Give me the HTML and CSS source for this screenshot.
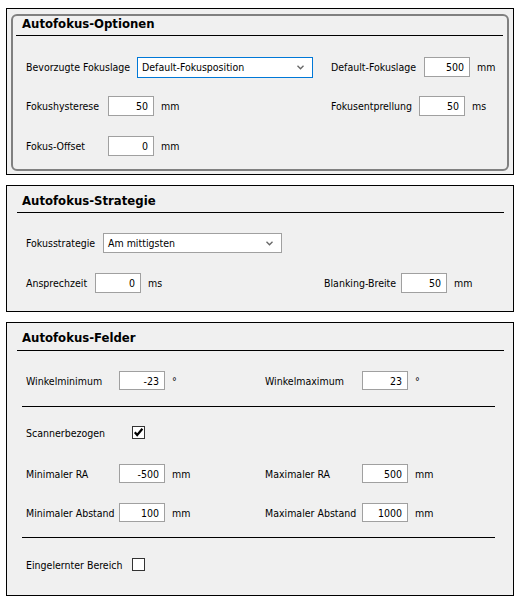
FILE: index.html
```html
<!DOCTYPE html>
<html>
<head>
<meta charset="utf-8">
<link rel="stylesheet" href="styles.css">
</head>
<body>
<div class="panel p1">
  <div class="group">
    <div class="hd">Autofokus-Optionen</div>
    <div class="row mt21">
      <div class="left l1">
        <span class="lbl w111">Bevorzugte Fokuslage</span>
        <div class="select focus w176"><span>Default-Fokusposition</span>
          <svg class="chev" width="7" height="5" viewBox="0 0 7 5"><polyline points="0.5,0.8 3.5,3.8 6.5,0.8" fill="none" stroke="#666" stroke-width="1.3"/></svg>
        </div>
      </div>
      <div class="right">
        <span class="lbl w93">Default-Fokuslage</span>
        <div class="inp">500</div><span class="unit">mm</span>
      </div>
    </div>
    <div class="row mt19">
      <div class="left l1">
        <span class="lbl w82">Fokushysterese</span>
        <div class="inp">50</div><span class="unit">mm</span>
      </div>
      <div class="right">
        <span class="lbl w88">Fokusentprellung</span>
        <div class="inp">50</div><span class="unit">ms</span>
      </div>
    </div>
    <div class="row mt20">
      <div class="left l1">
        <span class="lbl w82">Fokus-Offset</span>
        <div class="inp">0</div><span class="unit">mm</span>
      </div>
    </div>
  </div>
</div>

<div class="panel p2">
  <div class="hd hd2">Autofokus-Strategie</div>
  <div class="row mt20">
    <div class="left l2">
      <span class="lbl w77">Fokusstrategie</span>
      <div class="select w179"><span>Am mittigsten</span>
        <svg class="chev" width="7" height="5" viewBox="0 0 7 5"><polyline points="0.5,0.8 3.5,3.8 6.5,0.8" fill="none" stroke="#666" stroke-width="1.3"/></svg>
      </div>
    </div>
  </div>
  <div class="row mt20">
    <div class="left l2">
      <span class="lbl w69">Ansprechzeit</span>
      <div class="inp">0</div><span class="unit">ms</span>
    </div>
    <div class="right">
      <span class="lbl w77">Blanking-Breite</span>
      <div class="inp">50</div><span class="unit">mm</span>
    </div>
  </div>
</div>

<div class="panel p3">
  <div class="hd hd3">Autofokus-Felder</div>
  <div class="row r19 mt20">
    <div class="left l3">
      <span class="lbl w93">Winkelminimum</span>
      <div class="inp">-23</div><span class="unit">°</span>
    </div>
    <div class="right">
      <span class="lbl w97">Winkelmaximum</span>
      <div class="inp">23</div><span class="unit">°</span>
    </div>
  </div>
  <div class="sep mt16"></div>
  <div class="row r19 mt16">
    <span class="lbl w106">Scannerbezogen</span>
    <div class="cb">
      <svg width="11" height="11" viewBox="0 0 11 11"><polyline points="1.8,5.2 4.2,8 9.4,1.8" fill="none" stroke="#000" stroke-width="2.2"/></svg>
    </div>
  </div>
  <div class="row r19 mt22">
    <div class="left l3">
      <span class="lbl w93">Minimaler RA</span>
      <div class="inp">-500</div><span class="unit">mm</span>
    </div>
    <div class="right">
      <span class="lbl w97">Maximaler RA</span>
      <div class="inp">500</div><span class="unit">mm</span>
    </div>
  </div>
  <div class="row r19 mt20">
    <div class="left l3">
      <span class="lbl w93">Minimaler Abstand</span>
      <div class="inp">100</div><span class="unit">mm</span>
    </div>
    <div class="right">
      <span class="lbl w97">Maximaler Abstand</span>
      <div class="inp">1000</div><span class="unit">mm</span>
    </div>
  </div>
  <div class="sep mt15"></div>
  <div class="row r19 mt17">
    <span class="lbl w106">Eingelernter Bereich</span>
    <div class="cb"></div>
  </div>
</div>
</body>
</html>
```

FILE: styles.css
```css
* { box-sizing: border-box; }
body {
  margin: 0;
  padding-top: 8px;
  background: #ffffff;
  font-family: "DejaVu Sans Condensed", "Liberation Sans", sans-serif;
  font-size: 10.5px;
  color: #000;
}
.panel {
  margin-left: 6px;
  width: 508px;
  border: 1px solid #000;
  background: #f0f0f0;
  display: flex;
  flex-direction: column;
}
.p2, .p3 { margin-top: 10px; }
.p2 { padding-bottom: 18px; }
.p3 { padding-bottom: 21px; }
.group {
  margin: 5px 4px 3px 4px;
  border: 2px solid #808080;
  border-radius: 6px;
  padding-bottom: 13px;
}
.hd {
  font-weight: bold;
  font-size: 13px;
  line-height: 15px;
  margin: 0 4px 0 3px;
  padding: 0 0 4px 6px;
  border-bottom: 1px solid #000;
}
.hd2 { margin: 7px 9px 0 10px; padding-left: 5px; }
.hd3 { margin: 7px 9px 0 10px; padding-left: 5px; padding-bottom: 5px; }
.row {
  display: flex;
  align-items: center;
  height: 20px;
  padding-left: 19px;
}
.group .row { padding-left: 13px; }
.r19 { height: 19px; }
.left, .right { display: flex; align-items: center; height: 100%; }
.l1 { width: 305px; }
.l2 { width: 298px; }
.l3 { width: 239px; }
.lbl { white-space: nowrap; flex: none; }
.w69 { width: 69px; } .w77 { width: 77px; } .w82 { width: 82px; } .w88 { width: 88px; }
.w93 { width: 93px; } .w97 { width: 97px; } .w106 { width: 106px; } .w111 { width: 111px; }
.mt15 { margin-top: 15px; } .mt16 { margin-top: 16px; } .mt17 { margin-top: 17px; }
.mt19 { margin-top: 19px; } .mt20 { margin-top: 20px; } .mt21 { margin-top: 21px; } .mt22 { margin-top: 22px; }
.inp {
  width: 46px;
  height: 100%;
  background: #fff;
  border: 1px solid #a0a0a0;
  text-align: right;
  padding-right: 5px;
  display: flex;
  align-items: center;
  justify-content: flex-end;
  flex: none;
}
.unit { margin-left: 7px; }
.select {
  height: 20px;
  background: #fff;
  border: 1px solid #a0a0a0;
  display: flex;
  align-items: center;
  justify-content: space-between;
  padding: 0 8px 0 4px;
  flex: none;
}
.select.focus { border-color: #0078d7; height: 21px; }
.w176 { width: 176px; }
.w179 { width: 179px; }
.chev { display: block; }
.sep {
  height: 1px;
  background: #000;
  margin-left: 15px;
  width: 473px;
  flex: none;
}
.cb {
  width: 13px;
  height: 13px;
  border: 1px solid #333;
  background: #fff;
  display: flex;
  align-items: center;
  justify-content: center;
  flex: none;
}
.cb svg { display: block; }
```
